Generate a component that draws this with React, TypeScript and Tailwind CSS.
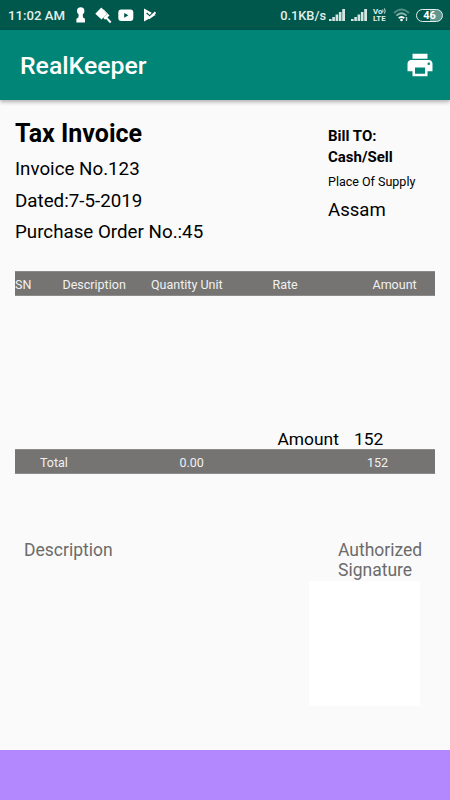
import type { ReactNode } from 'react'

const columns = [
  { label: 'SN', width: 'w-[47.5px]' },
  { label: 'Description', width: 'w-[88.5px]' },
  { label: 'Quantity Unit', width: 'w-[121.5px]' },
  { label: 'Rate', width: 'w-[100px]' },
  { label: 'Amount', width: 'w-[62px]' },
]

const totals = [
  { label: 'Total', width: 'w-[139.5px]' },
  { label: '0.00', width: 'w-[187.5px]' },
  { label: '152', width: 'w-[60px]' },
]

function SignalIcon() {
  return (
    <svg width="17" height="12" viewBox="0 0 17 12" fill="#d5e5e2">
      <rect x="0" y="10" width="2.6" height="2" />
      <rect x="3.3" y="8" width="2.6" height="4" />
      <rect x="6.6" y="5.5" width="2.6" height="6.5" />
      <rect x="9.9" y="3" width="2.6" height="9" />
      <rect x="13.2" y="0" width="2.8" height="12" />
    </svg>
  )
}

function StatusBar() {
  return (
    <div className="flex h-[30px] items-center bg-[#00574b] pl-2 pr-[7px] text-[#e3efed]">
      <span className="w-[68px] whitespace-nowrap pt-px text-[13.2px] font-medium">11:02 AM</span>
      <svg width="10" height="16" viewBox="0 0 10 16" fill="#fff">
        <circle cx="4.7" cy="4" r="3.7" />
        <path d="M2.8 6h3.8l.4 4.4 2 1.4v3.7H.4v-3.7l2-1.4z" />
      </svg>
      <svg className="ml-[9px]" width="17" height="17" viewBox="0 0 17 17" fill="#fff">
        <path d="M6.3.5 12 6.7 6.5 12.5.3 6.8z" />
        <path d="m8 2 5.5 6-5 5" fill="none" stroke="#00574b" strokeWidth="0.6" />
        <path d="m8.5 2.2 6 6.2-4.4 4.3-1.9-1.9L12 7 8 3z" />
        <path d="m11.5 10.8 4.2 4.7" stroke="#fff" strokeWidth="2" />
      </svg>
      <svg className="ml-[6px]" width="16" height="13" viewBox="0 0 16 13">
        <rect x="0.3" y="0.5" width="15" height="11.6" rx="3" fill="#fff" />
        <path d="M6.2 3.9v4.8l4.2-2.4z" fill="#00574b" />
      </svg>
      <svg className="ml-[9px]" width="14" height="14" viewBox="0 0 14 14">
        <path d="M1 .5 12.7 7 1 13.5z" fill="#fff" />
        <path d="m3.7 4.9 2.8 3L12 2.6" fill="none" stroke="#00574b" strokeWidth="1.4" />
        <path d="m4 7.2 2.6 2.6 5.9-5.6" fill="none" stroke="#fff" strokeWidth="1.9" />
      </svg>

      <div className="ml-auto flex items-center">
        <span className="mr-[3px] pt-px text-[12.8px] font-medium">0.1KB/s</span>
        <SignalIcon />
        <span className="w-[5px]" />
        <SignalIcon />
        <span className="ml-[5px] w-[14px] whitespace-nowrap pt-px text-[7.8px] font-bold leading-[6.6px]">
          Vo
          <svg className="inline align-baseline" width="4" height="6" viewBox="0 0 4 6" fill="none" stroke="#e3efed" strokeWidth="0.9">
            <path d="M.6 1.5q1 1.5 0 3M2.4.4q1.6 2.6 0 5.2" />
          </svg>
          <br />
          LTE
        </span>
        <svg className="ml-[6px]" width="17" height="14" viewBox="0 0 17 14" fill="none" strokeWidth="1.8">
          <path d="M1 5Q8.5-2 16 5" stroke="#4f8d84" />
          <path d="M3.4 7.6q5.1-4.6 10.2 0" stroke="#8fb7b1" />
          <path d="M5.7 10.2q2.8-2.5 5.6 0" stroke="#fff" />
          <circle cx="8.5" cy="12" r="1.3" fill="#fff" />
          <path d="M13.5 9v4" stroke="#b9d1cd" strokeWidth="1.4" />
        </svg>
        <span className="ml-[6px] flex h-[13px] w-[27px] items-center justify-center rounded-full border border-[#e3efed] bg-linear-to-r from-[#00574b] from-50% to-[#5f978e] to-50% pt-px text-[11px] font-bold leading-none text-white">
          46
        </span>
      </div>
    </div>
  )
}

function Bar({ children }: { children: ReactNode }) {
  return (
    <div className="flex h-[25px] items-center border-y border-[#8b8b89] bg-[#757472] pt-[3px] text-[12.5px] text-[#f1f1f1]">
      {children}
    </div>
  )
}

export default function App() {
  return (
    <div className="flex h-[800px] w-[450px] flex-col overflow-hidden bg-[#fafafa] font-['Roboto',sans-serif] text-black">
      <StatusBar />

      <header className="flex h-[70px] shrink-0 items-center justify-between bg-[#008577] pl-5 pr-[15px] shadow-[0_2px_4px_rgba(0,0,0,0.3)]">
        <h1 className="pt-px text-[24.8px] font-medium text-white">RealKeeper</h1>
        <svg width="30" height="30" viewBox="0 0 24 24" fill="#fff">
          <path d="M19 8H5c-1.66 0-3 1.34-3 3v6h4v4h12v-4h4v-6c0-1.66-1.34-3-3-3zm-3 11H8v-5h8v5zm3-7c-.55 0-1-.45-1-1s.45-1 1-1 1 .45 1 1-.45 1-1 1zm-1-9H6v4h12V3z" />
        </svg>
      </header>

      <main className="flex grow flex-col px-[15px]">
        {/* Invoice details */}
        <div className="flex h-[171px]">
          <div className="w-[313px] pt-[19px]">
            <h2 className="text-[25px] font-bold leading-[30px]">Tax Invoice</h2>
            <div className="pt-[5px] text-[18.75px] leading-[31.6px]">
              <p>Invoice No.123</p>
              <p>Dated:7-5-2019</p>
              <p>Purchase Order No.:45</p>
            </div>
          </div>
          <div className="pt-[26px]">
            <p className="text-[15px] font-bold leading-[20.5px]">
              Bill TO:
              <br />
              Cash/Sell
            </p>
            <p className="pt-[5px] text-[12.5px] leading-5">Place Of Supply</p>
            <p className="pt-[6px] text-[18.6px] leading-6">Assam</p>
          </div>
        </div>

        {/* Items */}
        <Bar>
          {columns.map((c) => (
            <span key={c.label} className={c.width}>{c.label}</span>
          ))}
        </Bar>
        <div className="flex h-[153px] items-end gap-[15px] pl-[262.5px] text-[17.4px] leading-[20px]">
          <span>Amount</span>
          <span>152</span>
        </div>
        <Bar>
          <div className="flex pl-[25px]">
            {totals.map((t) => (
              <span key={t.label} className={t.width}>{t.label}</span>
            ))}
          </div>
        </Bar>

        {/* Signature */}
        <div className="flex h-[107px] justify-between pl-[9px] pr-[13px] pt-[66px] text-[17.5px] leading-[20px] text-[#6b6b6b]">
          <span>Description</span>
          <span className="w-[84px]">Authorized Signature</span>
        </div>
        <div className="ml-[294px] h-[125px] w-[111px] bg-white" />
      </main>

      <footer className="h-[50px] shrink-0 bg-[#b388ff]" />
    </div>
  )
}
